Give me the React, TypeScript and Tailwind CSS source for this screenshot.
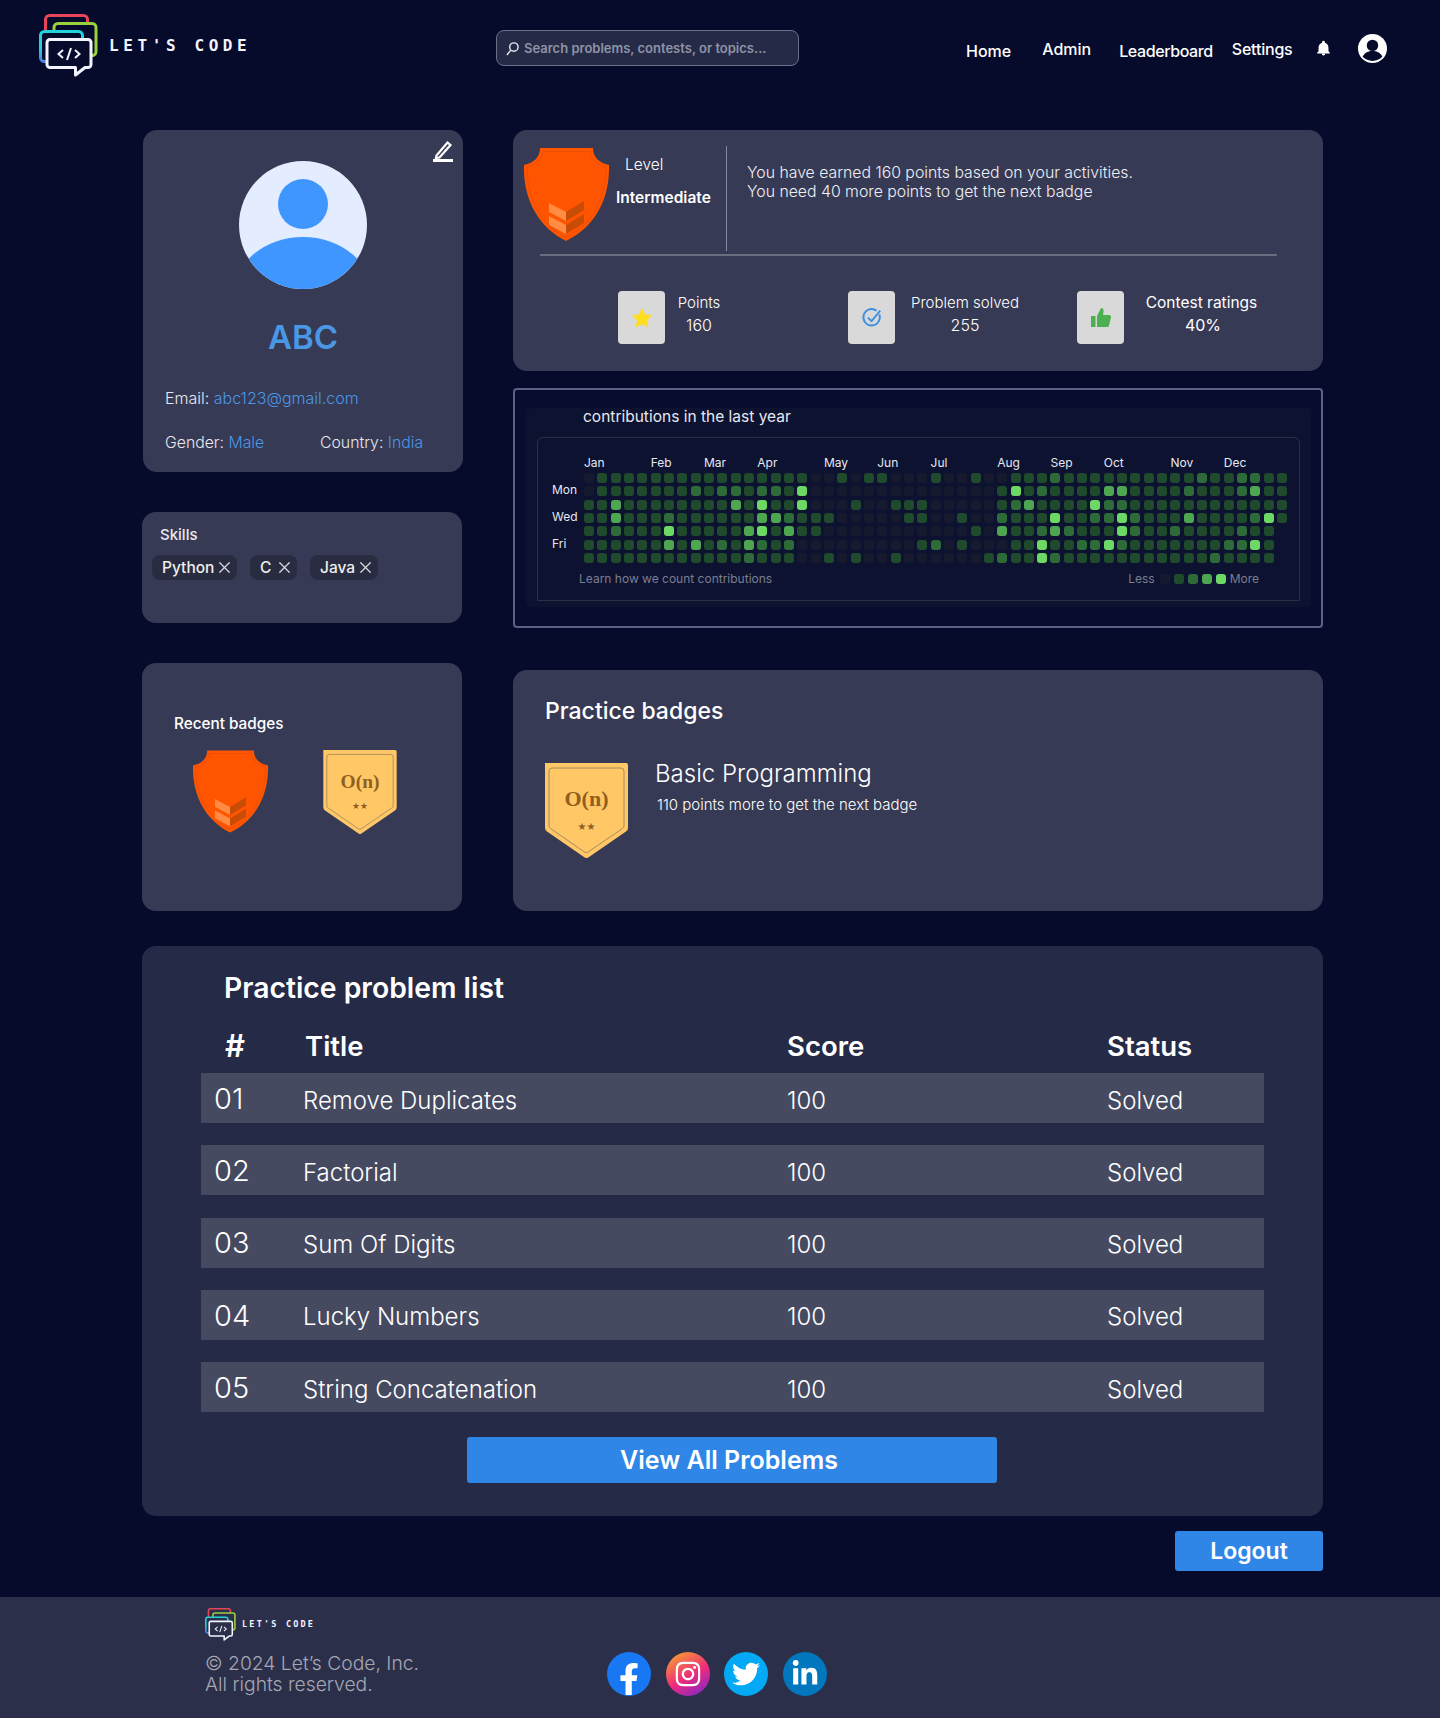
import React from 'react';
import { X } from 'lucide-react';
import { FaFacebookF, FaInstagram, FaTwitter, FaLinkedinIn } from 'react-icons/fa';

const months = [
  { name: 'Jan', col: 1 }, { name: 'Feb', col: 6 }, { name: 'Mar', col: 10 }, { name: 'Apr', col: 14 },
  { name: 'May', col: 19 }, { name: 'Jun', col: 23 }, { name: 'Jul', col: 27 }, { name: 'Aug', col: 32 },
  { name: 'Sep', col: 36 }, { name: 'Oct', col: 40 }, { name: 'Nov', col: 45 }, { name: 'Dec', col: 49 },
];

// one string per weekday, one char per week, x = no cell
const heat = [
  '01111111111111111001011000' + '100100111211111111112112211',
  '01111111212212214000000000' + '000001412111133111121112311',
  '11311111111314114000100111' + '000001231111422111111111111',
  '11311121111113321110000011' + '001002111411224211131111241',
  '11211141111134131100000000' + '00010311232111421121111211x',
  '11111131312132120000000001' + '20100011411224211111112241x',
  '11111111111121110010100100' + '00001211421111111111121111x',
];

const levelClass: Record<string, string> = {
  '0': 'bg-[#161a2e]',
  '1': 'bg-[#1f4a2c]',
  '2': 'bg-[#2d6b38]',
  '3': 'bg-[#4fa650]',
  '4': 'bg-[#6bd963]',
  x: 'bg-transparent',
};

const problems = [
  { id: '01', title: 'Remove Duplicates' },
  { id: '02', title: 'Factorial' },
  { id: '03', title: 'Sum Of Digits' },
  { id: '04', title: 'Lucky Numbers' },
  { id: '05', title: 'String Concatenation' },
];

const Logo = ({ bg, className }: { bg: string; className: string }) => (
  <svg viewBox="0 0 59 63" className={className} fill="none">
    <defs>
      <linearGradient id={`cy${bg}`} x1="0" y1="0" x2="0" y2="1">
        <stop offset="0.55" stopColor="#22d3dc" />
        <stop offset="1" stopColor="#4c7fe8" />
      </linearGradient>
    </defs>
    <rect x="6.5" y="1.5" width="42" height="32" rx="4" fill={bg} stroke="#e8455a" strokeWidth="3" />
    <rect x="15" y="9.5" width="42" height="32" rx="4" fill={bg} stroke="#9bd13c" strokeWidth="3" />
    <rect x="1.5" y="17.5" width="42" height="30" rx="4" fill={bg} stroke={`url(#cy${bg})`} strokeWidth="3" />
    <path
      d="M11 25.5h38a3 3 0 0 1 3 3v22a3 3 0 0 1-3 3h-3l-9.5 7.5v-7.5H11a3 3 0 0 1-3-3v-22a3 3 0 0 1 3-3z"
      fill={bg}
      stroke="#f3f4ff"
      strokeWidth="3"
      strokeLinejoin="round"
    />
    <path d="M24 36l-4.500 4 4.500 4M36 36l4.500 4-4.500 4M32 34l-4 12" stroke="#f3f4ff" strokeWidth="2" />
  </svg>
);

const Shield = ({ className }: { className: string }) => (
  <svg viewBox="0 0 85 93" className={className}>
    <path d="M16 0h53c0 9 6 15 16 17 1 34-14 62-43 76C14 79-1 51 0 17 10 15 16 9 16 0z" fill="#ff5500" />
    <path d="M19 3.500h47c1 8 7 13 16 15.500 0 31-13 57-40 70.500C16 76 3 50 3 19c9-2.500 15-7.500 16-15.500z" fill="none" stroke="#e94f06" strokeWidth="1" />
    <path d="M25 55l17 9v9l-17-9z M25 68l17 9v9l-17-9z" fill="#ff8c42" />
    <path d="M42 64l18-11v9L42 73z M42 77l18-11v9L42 86z" fill="#c94c06" />
  </svg>
);

const Pennant = ({ className }: { className: string }) => (
  <svg viewBox="0 0 83 95" className={className}>
    <path d="M2 0h79a2 2 0 0 1 2 2v63a4 4 0 0 1-2 3.500L44 94a4 4 0 0 1-5 0L2 68.500A4 4 0 0 1 0 65V0z" fill="#ffc766" />
    <path d="M7 5h69a3 3 0 0 1 3 3v55a3 3 0 0 1-1.500 2.500L43 89a3 3 0 0 1-3.500 0L5.500 65.500A3 3 0 0 1 4 63V8a3 3 0 0 1 3-3z" fill="none" stroke="#a68c5e" strokeWidth="1" />
    <text x="41.500" y="43" textAnchor="middle" fontFamily="'Liberation Serif', serif" fontWeight="700" fontSize="22" fill="#8f5f1f">
      O(n)
    </text>
    <text x="41.500" y="67" textAnchor="middle" fontFamily="'DejaVu Sans', sans-serif" fontSize="10" fill="#8f5f1f">
      ★★
    </text>
  </svg>
);

const Stat = ({ icon, children, className }: { icon: React.ReactNode; children: React.ReactNode; className: string }) => (
  <div className={`flex ${className}`}>
    <div className="flex h-[53px] w-[47px] items-center justify-center rounded-[4px] bg-[#d9d9d9]">{icon}</div>
    {children}
  </div>
);

const Chip = ({ label, className }: { label: string; className: string }) => (
  <div className={`flex h-[25px] items-center justify-between rounded-lg bg-[#292c40] pr-[3px] text-[15.500px] font-medium text-[#eeeeee] ${className}`}>
    <span>{label}</span>
    <X className="h-[19px] w-[19px] text-[#d8d9de]" strokeWidth={1.5} />
  </div>
);

const Social = ({ className, children }: { className: string; children: React.ReactNode }) => (
  <div className={`flex h-[44px] w-[44px] items-center justify-center overflow-hidden rounded-full text-white ${className}`}>{children}</div>
);

export default function App() {
  return (
    <div className="h-[1718px] overflow-hidden bg-[#060a2b] font-['Inter',sans-serif] text-white">
      {/* navbar */}
      <header className="flex h-[130px] items-start">
        <div className="ml-[39px] mt-[14px] flex items-start">
          <Logo bg="#060a2b" className="h-[63px] w-[59px] shrink-0" />
          <span className="ml-[11px] mt-[21px] w-[140px] font-['DejaVu_Sans_Mono',monospace] text-base font-bold leading-[22px] tracking-[4.600px] whitespace-nowrap text-[#f3f4ff]">
            LET'S CODE
          </span>
        </div>
        <div className="ml-[247px] mt-[30px] flex h-[36px] w-[303px] items-center rounded-lg border border-[#6b7089] bg-[#252a46] pl-2">
          <svg viewBox="0 0 16 16" className="h-[15px] w-[15px]" fill="none" stroke="#e5e7ef" strokeWidth="1.500">
            <circle cx="9.500" cy="6.500" r="4.500" />
            <path d="M6 10l-4 5" />
          </svg>
          <span className="ml-[4px] mt-[1px] text-[13px] font-semibold text-[#8f93a6]">Search problems, contests, or topics...</span>
        </div>
        <nav className="ml-[167px] mt-[34px] flex items-center text-base font-medium text-white">
          <span className="mt-[4px]">Home</span>
          <span className="ml-[31px]">Admin</span>
          <span className="ml-[28px] mt-[4px] tracking-[-0.4px]">Leaderboard</span>
          <span className="ml-[19px] tracking-[-0.2px]">Settings</span>
          <svg viewBox="0 0 24 24" className="ml-[22px] h-[17px] w-[17px]" fill="#ffffff">
            <path d="M12 22a2.500 2.500 0 0 0 2.500-2.500h-5A2.500 2.500 0 0 0 12 22zm7-6v-5c0-3.500-2-6.300-5-7V3a2 2 0 0 0-4 0v1c-3 .7-5 3.500-5 7v5l-2 2v1h18v-1z" />
          </svg>
          <svg viewBox="0 0 28 28" className="ml-[26px] h-[29px] w-[29px]">
            <circle cx="14" cy="14" r="14" fill="#ffffff" />
            <circle cx="14" cy="11" r="5.500" fill="#060a2b" />
            <path d="M4.500 22c2-4 5.500-5.500 9.500-5.500s7.500 1.500 9.500 5.500c-2.500 2.500-5.800 4-9.500 4s-7-1.500-9.500-4z" fill="#060a2b" />
          </svg>
        </nav>
      </header>

      {/* main grid */}
      <main className="ml-[142px] mr-[117px] flex gap-[51px]">
        <div className="flex w-[320px] shrink-0 flex-col">
          <section className="relative ml-[1px] mr-[-1px] h-[342px] rounded-[14px] bg-[#373a54] pt-[31px]">
            <svg viewBox="0 0 20 22" className="absolute right-[10px] top-[10px] h-[22px] w-[20px]" fill="none" stroke="#ffffff">
              <path d="M3.500 15.500L14.500 2.500l3 2.500L6.500 17.500l-3.500 .5z" strokeWidth="2.200" />
              <path d="M0 20.500h20" strokeWidth="3" />
            </svg>
            <svg viewBox="0 0 128 128" className="mx-auto h-[128px] w-[128px]">
              <clipPath id="av">
                <circle cx="64" cy="64" r="64" />
              </clipPath>
              <circle cx="64" cy="64" r="64" fill="#e4ecff" />
              <circle cx="64" cy="43" r="25" fill="#4096ff" />
              <ellipse cx="64" cy="135" rx="70" ry="59" fill="#4096ff" clipPath="url(#av)" />
            </svg>
            <h1 className="mt-[28px] text-center text-[33px] font-semibold leading-[40px] text-[#4a97e6]">ABC</h1>
            <p className="ml-[22px] mt-[29px] text-base font-light leading-[24px] text-[#e8e8ee]">
              Email: <span className="text-[#4a97e6]">abc123@gmail.com</span>
            </p>
            <div className="ml-[22px] mt-[21px] flex text-[15.800px] font-light leading-[24px] text-[#e8e8ee]">
              <span className="w-[155px]">
                Gender: <span className="text-[#4a97e6]">Male</span>
              </span>
              <span>
                Country: <span className="text-[#4a97e6]">India</span>
              </span>
            </div>
          </section>

          <section className="mt-[40px] h-[111px] rounded-[14px] bg-[#373a54] pl-[10px] pt-[13px]">
            <h2 className="ml-[8px] text-[15px] font-medium leading-[20px] text-[#e8e8ee]">Skills</h2>
            <div className="mt-[10px] flex">
              <Chip label="Python" className="w-[85px] pl-[10px]" />
              <Chip label="C" className="ml-[13px] w-[47px] pl-[10px]" />
              <Chip label="Java" className="ml-[13px] w-[68px] pl-[10px]" />
            </div>
          </section>

          <section className="mt-[40px] h-[248px] rounded-[14px] bg-[#373a54] pl-[32px] pt-[50px]">
            <h2 className="text-[15.300px] font-medium leading-[22px]">Recent badges</h2>
            <div className="mt-[15px] flex items-start">
              <Shield className="ml-[19px] h-[83px] w-[75px]" />
              <Pennant className="ml-[55px] h-[84px] w-[74px]" />
            </div>
          </section>
        </div>

        <div className="flex w-[810px] shrink-0 flex-col">
          {/* level card */}
          <section className="h-[241px] rounded-[14px] bg-[#373a54]">
            <div className="flex h-[122px] pl-[11px] pt-[16px]">
              <Shield className="mt-[2px] h-[93px] w-[85px] shrink-0" />
              <div className="w-[117px] shrink-0 text-[15.500px] leading-[20px]">
                <div className="ml-[16px] mt-[9px] font-light">Level</div>
                <div className="ml-[7px] mt-[13px] font-semibold">Intermediate</div>
              </div>
              <div className="h-[105px] w-px bg-[#85879a]" />
              <p className="ml-[20px] mt-[17px] text-[15.800px] font-light leading-[19px] text-[#f0f0f4]">
                You have earned 160 points based on your activities.
                <br />
                You need 40 more points to get the next badge
              </p>
            </div>
            <div className="mx-[27px] mt-[2px] h-[2px] w-[737px] bg-[#6a6d80]" />
            <div className="ml-[105px] mt-[35px] flex">
              <Stat
                className="w-[230px]"
                icon={
                  <svg viewBox="0 0 24 24" className="h-[22px] w-[22px]" fill="#ffdd1f">
                    <path d="M12 2l3 6.500 7 1-5 5 1.200 7L12 18.300 5.800 21.500 7 14.500l-5-5 7-1z" stroke="#ffdd1f" strokeLinejoin="round" />
                  </svg>
                }
              >
                <div className="ml-[11px] mt-[2px] w-[46px] text-center text-[15px] font-light leading-[20px]">
                  <div>Points</div>
                  <div className="text-base">160</div>
                </div>
              </Stat>
              <Stat
                className="w-[229px]"
                icon={
                  <svg viewBox="0 0 24 24" className="h-[22px] w-[22px]" fill="none" stroke="#3d8fe0" strokeWidth="2">
                    <path d="M20 8a9 9 0 1 1-3-4" />
                    <path d="M7.500 11.500l4 4L21 4" />
                  </svg>
                }
              >
                <div className="ml-[16px] mt-[2px] w-[108px] text-center text-[15px] font-light leading-[20px]">
                  <div>Problem solved</div>
                  <div className="text-base">255</div>
                </div>
              </Stat>
              <Stat
                className=""
                icon={
                  <svg viewBox="0 0 24 24" className="h-[24px] w-[24px]" fill="#4caf50">
                    <path d="M2 10h4.500v11H2zM8 21V10l4-8c2 0 3 1.500 2.500 4L14 9h6a2 2 0 0 1 2 2.500l-2 8a2 2 0 0 1-2 1.500z" />
                  </svg>
                }
              >
                <div className="ml-[21px] mt-[2px] w-[113px] text-center text-[15.500px] font-normal leading-[20px]">
                  <div>Contest ratings</div>
                  <div className="ml-[3px] text-base">40%</div>
                </div>
              </Stat>
            </div>
          </section>

          {/* contribution graph */}
          <section className="mt-[17px] h-[240px] rounded-[4px] border-2 border-[#5c6082] bg-[#080c2f] pl-[11px] pt-[18px]">
            <div className="flex h-[199px] w-[785px] flex-col rounded bg-[#0d1230] pl-[11px]">
              <h3 className="ml-[46px] mt-[-3px] text-[15.500px] leading-[24px] text-[#e6e8f0]">contributions in the last year</h3>
              <div className="mt-[8px] h-[164px] w-[763px] rounded-t-md border border-[#2c3045] pl-[14px] pt-[18px]">
                <div className="flex">
                  <div className="mt-[14px] w-[32px] text-xs leading-[13.330px] text-[#e6e8f0]">
                    <div className="mt-[13.330px]">Mon</div>
                    <div className="mt-[13.330px]">Wed</div>
                    <div className="mt-[13.330px]">Fri</div>
                  </div>
                  <div>
                    <div className="grid h-[14px] grid-cols-[repeat(53,13.330px)] text-xs leading-[14px] text-[#e6e8f0]">
                      {months.map((m) => (
                        <span key={m.name} className="whitespace-nowrap" style={{ gridColumnStart: m.col }}>
                          {m.name}
                        </span>
                      ))}
                    </div>
                    <div className="mt-[3px] flex flex-col gap-[3.330px]">
                      {heat.map((row, r) => (
                        <div key={r} className="flex gap-[3.330px]">
                          {row.split('').map((lv, c) => (
                            <div key={c} className={`h-[10px] w-[10px] rounded-[3px] ${levelClass[lv]}`} />
                          ))}
                        </div>
                      ))}
                    </div>
                  </div>
                </div>
                <div className="mt-[8px] flex w-[707px] items-center justify-between pl-[27px] text-xs leading-[16px] text-[#7b7f92]">
                  <span>Learn how we count contributions</span>
                  <span className="flex items-center gap-[4px]">
                    Less
                    <i className="ml-[1px] h-[10px] w-[10px] rounded-[3px] bg-[#161a2e]" />
                    <i className="h-[10px] w-[10px] rounded-[3px] bg-[#1f4a2c]" />
                    <i className="h-[10px] w-[10px] rounded-[3px] bg-[#2d6b38]" />
                    <i className="h-[10px] w-[10px] rounded-[3px] bg-[#4fa650]" />
                    <i className="h-[10px] w-[10px] rounded-[3px] bg-[#6bd963]" />
                    More
                  </span>
                </div>
              </div>
            </div>
          </section>

          {/* practice badges */}
          <section className="mt-[42px] h-[241px] rounded-[14px] bg-[#373a54] pl-[32px] pt-[25px]">
            <h2 className="text-[23px] font-medium leading-[32px]">Practice badges</h2>
            <div className="mt-[36px] flex">
              <Pennant className="h-[95px] w-[83px] shrink-0" />
              <div className="ml-[27px]">
                <div className="mt-[-1px] text-[24px] font-light leading-[24px]">Basic Programming</div>
                <div className="ml-[2px] mt-[9px] text-[15px] font-light leading-[20px]">110 points more to get the next badge</div>
              </div>
            </div>
          </section>
        </div>
      </main>

      {/* problem list */}
      <section className="ml-[142px] mr-[117px] mt-[35px] h-[570px] rounded-[14px] bg-[#252a46] pl-[59px] pt-[23px]">
        <h2 className="ml-[23px] text-[28.300px] font-semibold leading-[38px]">Practice problem list</h2>
        <div className="mt-[20px] grid w-[1063px] grid-cols-[102px_484px_320px_1fr] pb-[8px] text-[27.500px] font-semibold leading-[38px]">
          <span className="pl-[24px] text-[31px]">#</span>
          <span className="pl-[2px]">Title</span>
          <span>Score</span>
          <span>Status</span>
        </div>
        <div className="flex w-[1063px] flex-col gap-[22.330px]">
          {problems.map((p) => (
            <div key={p.id} className="grid h-[50px] grid-cols-[102px_484px_320px_1fr] items-center bg-[#464a61] text-[24px] font-light">
              <span className="mt-[1px] pl-[13px] text-[29px]">{p.id}</span>
              <span className="mt-[5px]">{p.title}</span>
              <span className="mt-[5px]">100</span>
              <span className="mt-[5px]">Solved</span>
            </div>
          ))}
        </div>
        <button className="ml-[266px] mt-[25px] h-[46px] w-[530px] rounded-[3px] bg-[#2f86e6] pr-[6px] text-[25px] font-semibold">View All Problems</button>
      </section>

      <div className="mr-[117px] mt-[15px] flex justify-end">
        <button className="h-[40px] w-[148px] rounded-[3px] bg-[#2f86e6] text-[23px] font-semibold">Logout</button>
      </div>

      {/* footer */}
      <footer className="mt-[26px] flex h-[121px] bg-[#2b2f4a] pl-[205px]">
        <div className="w-[230px] shrink-0 pt-[11px]">
          <div className="flex items-start">
            <Logo bg="#2b2f4a" className="h-[33px] w-[31px] shrink-0" />
            <span className="ml-[6px] mt-[11px] font-['DejaVu_Sans_Mono',monospace] text-[8.500px] font-bold leading-[10px] tracking-[2.200px] whitespace-nowrap text-[#f3f4ff]">
              LET'S CODE
            </span>
          </div>
          <p className="mt-[12px] text-[19.300px] font-light leading-[20.500px] text-[#a5a7b3]">
            © 2024 Let’s Code, Inc.
            <br />
            All rights reserved.
          </p>
        </div>
        <div className="ml-[172px] mt-[55px] flex gap-[14.500px]">
          <Social className="bg-[#1877f2]">
            <FaFacebookF className="mt-[10px] h-[32px] w-[32px]" />
          </Social>
          <Social className="bg-[linear-gradient(150deg,#f9b025,#ee2a7b_55%,#6f28d7)]">
            <FaInstagram className="h-[28px] w-[28px]" />
          </Social>
          <Social className="bg-[#03a9f4]">
            <FaTwitter className="h-[28px] w-[28px]" />
          </Social>
          <Social className="bg-[#0277bd]">
            <FaLinkedinIn className="h-[28px] w-[28px]" />
          </Social>
        </div>
      </footer>
    </div>
  );
}
